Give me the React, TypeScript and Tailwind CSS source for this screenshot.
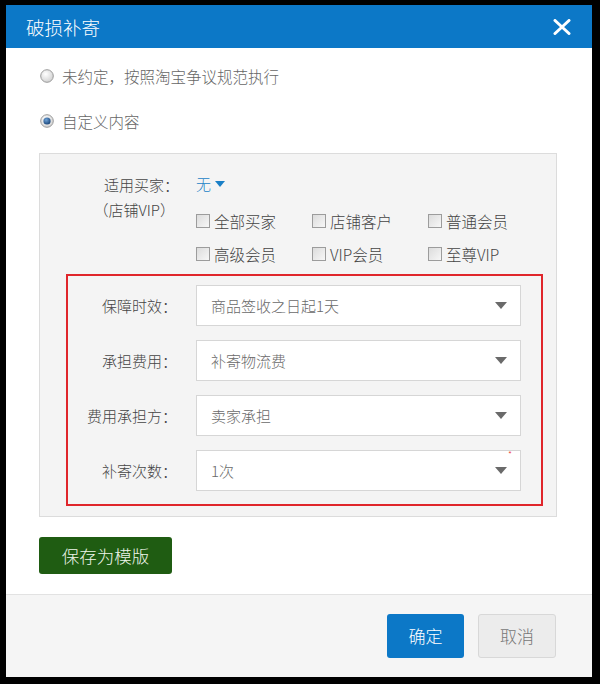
import React from "react";

const FONT = { fontFamily: '"Noto Sans CJK SC", "Noto Sans", sans-serif' };

function Radio({ checked }: { checked?: boolean }) {
  return (
    <svg width="14" height="14" viewBox="0 0 14 14" className="shrink-0">
      <defs>
        <radialGradient id={checked ? "rg1" : "rg0"} cx="40%" cy="35%" r="70%">
          <stop offset="0%" stopColor="#ffffff" />
          <stop offset="100%" stopColor="#cfcfcf" />
        </radialGradient>
        <radialGradient id="dot" cx="40%" cy="35%" r="70%">
          <stop offset="0%" stopColor="#6fa3d8" />
          <stop offset="100%" stopColor="#143f73" />
        </radialGradient>
      </defs>
      <circle cx="7" cy="7" r="6.3" fill={`url(#${checked ? "rg1" : "rg0"})`} stroke="#9b9b9b" strokeWidth="1" />
      {checked && <circle cx="7" cy="7" r="3.6" fill="url(#dot)" />}
    </svg>
  );
}

function Checkbox({ label }: { label: string }) {
  return (
    <div className="flex items-center w-[116px] h-[24px]">
      <span className="w-[14px] h-[14px] border border-[#9c9c9c] bg-linear-to-br from-[#dcdcdc] to-[#f7f7f7] shrink-0" />
      <span className="ml-[4px] text-[15.5px] leading-[24px] text-[#444]">{label}</span>
    </div>
  );
}

function Select({ label, value, star }: { label: string; value: string; star?: boolean }) {
  return (
    <div className="flex items-center h-[41px]">
      <div className="w-[109px] text-right text-[15px] text-[#444] leading-[20px]">{label}</div>
      <div className="relative ml-[19px] w-[325px] h-[41px] border border-[#d6d6d6] bg-white flex items-center justify-between pl-[14px] pr-[13px]">
        <span className="text-[15px] text-[#6a6a6a] leading-[20px]">{value}</span>
        <svg width="12" height="7" viewBox="0 0 12 7">
          <path d="M0 0 H12 L6 7 Z" fill="#6a6a6a" />
        </svg>
        {star && <span className="absolute right-[8px] top-[-1px] text-[9px] leading-[10px] text-[#e33]">*</span>}
      </div>
    </div>
  );
}

export default function App() {
  return (
    <div className="w-[600px] h-[684px] bg-black pt-[5px] pl-[6px] font-light" style={FONT}>
      <div className="w-[586px] h-[672px] bg-white flex flex-col">
        <div className="h-[43px] bg-[#0c78c7] flex items-center justify-between pl-[20px] pr-[21px] shrink-0">
          <span className="text-[18.5px] leading-[24px] text-white">破损补寄</span>
          <svg width="18" height="16" viewBox="0 0 18 16">
            <path d="M2 1.5 L16 14.5 M16 1.5 L2 14.5" stroke="#ffffff" strokeWidth="3" strokeLinecap="round" />
          </svg>
        </div>

        <div className="flex-1 pt-[13px] pl-[33px] pr-[35px]">
          <div className="flex items-center h-[30px] pl-[1px]">
            <Radio />
            <span className="ml-[8px] text-[15.5px] text-[#666] leading-[22px]">未约定，按照淘宝争议规范执行</span>
          </div>
          <div className="flex items-center h-[30px] mt-[15px] pl-[1px]">
            <Radio checked />
            <span className="ml-[8px] text-[15.5px] text-[#666] leading-[22px]">自定义内容</span>
          </div>

          <div className="mt-[17px] w-[518px] border border-[#dcdcdc] bg-[#f4f4f4] pt-[18px] pb-[10px]">
            <div className="flex">
              <div className="w-[139px] text-right text-[15px] text-[#444] leading-[25px]">
                <div>适用买家：</div>
                <div className="pr-[4px]">（店铺VIP）</div>
              </div>
              <div className="ml-[17px]">
                <div className="flex items-center h-[24px]">
                  <span className="text-[15px] text-[#1a7fc6] leading-[24px]">无</span>
                  <svg width="10" height="6" viewBox="0 0 10 6" className="ml-[4px]">
                    <path d="M0 0 H10 L5 6 Z" fill="#1a7fc6" />
                  </svg>
                </div>
                <div className="flex mt-[13px]">
                  <Checkbox label="全部买家" />
                  <Checkbox label="店铺客户" />
                  <Checkbox label="普通会员" />
                </div>
                <div className="flex mt-[9px]">
                  <Checkbox label="高级会员" />
                  <Checkbox label="VIP会员" />
                  <Checkbox label="至尊VIP" />
                </div>
              </div>
            </div>

            <div className="mt-[8px] ml-[26px] w-[477px] border-2 border-[#e0262b] pt-[9px] pb-[13px] flex flex-col gap-[14px]">
              <Select label="保障时效：" value="商品签收之日起1天" />
              <Select label="承担费用：" value="补寄物流费" />
              <Select label="费用承担方：" value="卖家承担" />
              <Select label="补寄次数：" value="1次" star />
            </div>
          </div>

          <button className="mt-[20px] w-[133px] h-[37px] rounded-[3px] bg-[#1f5c12] text-[17.5px] text-[#eef5ea] leading-[24px]">
            保存为模版
          </button>
        </div>

        <div className="h-[83px] shrink-0 border-t border-[#e2e2e2] bg-[#f5f5f5] flex items-center justify-end pr-[36px] gap-[14px]">
          <button className="w-[77px] h-[44px] rounded-[3px] bg-[#0c78c7] text-white text-[17px] leading-[24px]">确定</button>
          <button className="w-[78px] h-[44px] rounded-[3px] bg-[#ececec] border border-[#d8d8d8] text-[#777] text-[17px] leading-[24px]">取消</button>
        </div>
      </div>
    </div>
  );
}
